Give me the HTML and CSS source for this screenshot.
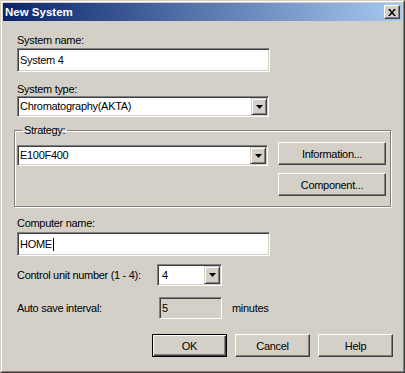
FILE: index.html
```html
<!DOCTYPE html>
<html lang="en">
<head>
    <meta charset="UTF-8">
    <title>New System</title>
    <link rel="stylesheet" href="styles.css">
</head>
<body>
    <div class="window">
        <div class="window-inner">
            <header class="titlebar">
                <span class="title">New System</span>
                <span class="close-btn">
                    <svg width="8" height="7" viewBox="0 0 8 7"><path d="M0 0h2l2 2.4 2-2.4h2l-3 3.5 3 3.5h-2l-2-2.4-2 2.4h-2l3-3.5z" fill="#000"/></svg>
                </span>
            </header>

            <main class="dialog-body">
                <div class="field-label first">System name:</div>
                <div class="edit sunken name-input">System 4</div>

                <div class="field-label">System type:</div>
                <div class="combo sunken type-combo">
                    <span class="combo-text">Chromatography(AKTA)</span>
                    <span class="drop-btn"><svg width="7" height="4" viewBox="0 0 7 4"><path d="M0 0h7l-3.5 4z" fill="#000"/></svg></span>
                </div>

                <fieldset class="group">
                    <legend>Strategy:</legend>
                    <div class="group-row">
                        <div class="combo sunken strategy-combo">
                            <span class="combo-text">E100F400</span>
                            <span class="drop-btn"><svg width="7" height="4" viewBox="0 0 7 4"><path d="M0 0h7l-3.5 4z" fill="#000"/></svg></span>
                        </div>
                        <div class="side-buttons">
                            <button class="btn side-btn">Information...</button>
                            <button class="btn side-btn">Component...</button>
                        </div>
                    </div>
                </fieldset>

                <div class="field-label computer-label">Computer name:</div>
                <div class="edit sunken name-input">HOME<span class="caret"></span></div>

                <div class="form-row unit-row">
                    <span class="row-label">Control unit number (1 - 4):</span>
                    <div class="combo sunken unit-combo">
                        <span class="combo-text">4</span>
                        <span class="drop-btn"><svg width="7" height="4" viewBox="0 0 7 4"><path d="M0 0h7l-3.5 4z" fill="#000"/></svg></span>
                    </div>
                </div>

                <div class="form-row save-row">
                    <span class="row-label">Auto save interval:</span>
                    <div class="edit sunken readonly save-input">5</div>
                    <span class="unit-text">minutes</span>
                </div>

                <div class="button-row">
                    <button class="btn dlg-btn default">OK</button>
                    <button class="btn dlg-btn">Cancel</button>
                    <button class="btn dlg-btn">Help</button>
                </div>
            </main>
        </div>
    </div>
</body>
</html>
```

FILE: styles.css
```css
:root {
    --face: #d4d0c8;
    --shadow: #808080;
    --dark: #404040;
    --light: #ffffff;
}

* {
    margin: 0;
    padding: 0;
    box-sizing: border-box;
}

body {
    font-family: 'Liberation Sans', Arial, sans-serif;
    font-size: 11px;
    line-height: 13px;
    letter-spacing: -0.3px;
    color: #000;
    background: var(--face);
}

.window {
    width: 405px;
    height: 373px;
    border: 1px solid;
    border-color: var(--face) var(--dark) var(--dark) var(--face);
    background: var(--face);
}

.window-inner {
    height: 100%;
    border: 1px solid;
    border-color: var(--light) var(--shadow) var(--shadow) var(--light);
    padding: 1px;
}

.titlebar {
    height: 18px;
    display: flex;
    align-items: center;
    justify-content: space-between;
    padding: 0 2px 0 2px;
    background: linear-gradient(to right, #0a246a, #a6caf0);
}

.title {
    color: #fff;
    font-weight: bold;
    font-size: 11.5px;
    letter-spacing: 0;
}

.close-btn {
    width: 16px;
    height: 14px;
    display: flex;
    align-items: center;
    justify-content: center;
    background: var(--face);
    border: 1px solid;
    border-color: var(--light) var(--dark) var(--dark) var(--light);
    box-shadow: inset -1px -1px var(--shadow);
}

.dialog-body {
    padding-left: 11px;
}

.field-label {
    padding-left: 3px;
    margin-top: 11px;
    height: 13px;
}

.field-label.first {
    margin-top: 13px;
    margin-bottom: 1px;
}

.computer-label {
    margin-top: 10px;
    margin-bottom: 2px;
}

/* sunken 3d edge used by edits and combos */
.sunken {
    border: 1px solid;
    border-color: var(--shadow) var(--light) var(--light) var(--shadow);
    box-shadow: inset 1px 1px var(--dark), inset -1px -1px var(--face);
    background: #fff;
}

.edit {
    display: flex;
    align-items: center;
    padding-left: 2px;
}

.name-input {
    margin-left: 3px;
    width: 253px;
    height: 24px;
}

.caret {
    display: inline-block;
    width: 1px;
    height: 13px;
    background: #000;
    margin-left: 1px;
}

.combo {
    display: flex;
    padding: 1px;
}

.combo-text {
    flex: 1;
    display: flex;
    align-items: center;
    padding-left: 1px;
}

.drop-btn {
    width: 16px;
    height: 100%;
    display: flex;
    align-items: center;
    justify-content: center;
    background: var(--face);
    border: 1px solid;
    border-color: var(--face) var(--dark) var(--dark) var(--face);
    box-shadow: inset 1px 1px var(--light), inset -1px -1px var(--shadow);
}

.type-combo {
    margin-left: 3px;
    width: 252px;
    height: 21px;
}

.group {
    margin-top: 7px;
    width: 377px;
    border: 1px solid var(--shadow);
    box-shadow: inset 1px 1px var(--light), 1px 1px var(--light);
    padding: 5px 4px 10px 2px;
}

.group legend {
    margin-left: 5px;
    padding: 0 2px;
    line-height: 13px;
}

.group-row {
    display: flex;
    gap: 10px;
}

.strategy-combo {
    margin-top: 3px;
    width: 251px;
    height: 21px;
}

.side-buttons {
    display: flex;
    flex-direction: column;
    gap: 8px;
}

.btn {
    font-family: inherit;
    font-size: 11px;
    letter-spacing: -0.3px;
    color: #000;
    background: var(--face);
    border: 1px solid;
    border-color: var(--light) var(--dark) var(--dark) var(--light);
    box-shadow: inset -1px -1px var(--shadow);
}

.side-btn {
    width: 108px;
    height: 23px;
}

.form-row {
    display: flex;
    align-items: center;
    padding-left: 3px;
}

.row-label {
    width: 140px;
}

.unit-row {
    margin-top: 8px;
}

.unit-combo {
    width: 65px;
    height: 22px;
}

.unit-combo .combo-text {
    padding-left: 3px;
}

.save-row {
    margin-top: 11px;
}

.save-input {
    margin-left: 2px;
    width: 63px;
    height: 22px;
}

.readonly {
    background: var(--face);
}

.unit-text {
    margin-left: 10px;
}

.button-row {
    display: flex;
    justify-content: flex-end;
    gap: 8px;
    padding-right: 9px;
    margin-top: 15px;
}

.dlg-btn {
    width: 75px;
    height: 23px;
}

.dlg-btn.default {
    border-color: #000;
    box-shadow: inset 1px 1px var(--light), inset -1px -1px var(--dark), inset -2px -2px var(--shadow);
}
```
